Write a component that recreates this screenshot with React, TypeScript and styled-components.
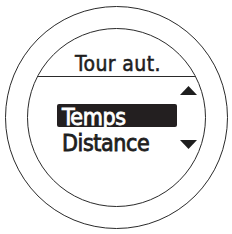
import React from "react";
import styled, { createGlobalStyle } from "styled-components";

const Global = createGlobalStyle`
  html, body { margin: 0; padding: 0; background: #fff; }
  body { width: 232px; height: 234px; overflow: hidden; font-family: "DejaVu Sans Condensed", "DejaVu Sans", sans-serif; }
`;

const Page = styled.div`
  width: 232px;
  height: 234px;
  padding: 6px 0 0 5px;
  box-sizing: border-box;
`;

const Bezel = styled.div`
  width: 223px;
  height: 223px;
  box-sizing: border-box;
  border: 1.4px solid #2a2a2a;
  border-radius: 50%;
  display: flex;
  align-items: center;
  justify-content: center;
`;

const Face = styled.div`
  width: 179px;
  height: 179px;
  box-sizing: border-box;
  border: 1.4px solid #2a2a2a;
  border-radius: 50%;
  overflow: hidden;
  display: flex;
  flex-direction: column;
`;

const Header = styled.div`
  height: 48px;
  flex: none;
  border-bottom: 1.3px solid #2a2a2a;
  display: flex;
  align-items: flex-end;
  justify-content: center;
  padding-bottom: 0;
  box-sizing: border-box;
`;

const Title = styled.span`
  font-size: 21px;
  line-height: 24px;
  color: #1e1e1e;
  -webkit-text-stroke: 0.5px #1e1e1e;
  letter-spacing: 0.4px;
  padding-left: 3px;
`;

const Body = styled.div`
  display: flex;
  padding: 9px 0 0 29px;
`;

const List = styled.div`
  display: flex;
  flex-direction: column;
  padding-top: 18px;
  width: 120px;
`;

const Item = styled.div<{ $active?: boolean }>`
  height: 23px;
  box-sizing: border-box;
  padding: 2px 0 0 5px;
  border-radius: 2px;
  font-size: 23px;
  line-height: 22px;
  color: ${(p) => (p.$active ? "#fff" : "#1e1e1e")};
  -webkit-text-stroke: 0.8px ${(p) => (p.$active ? "#fff" : "#1e1e1e")};
  letter-spacing: -0.4px;
  background: ${(p) => (p.$active ? "#231f20" : "transparent")};
  margin-bottom: 3px;
`;

const Arrows = styled.div`
  display: flex;
  flex-direction: column;
  justify-content: space-between;
  height: 63px;
  margin-left: 3px;
`;

const Arrow = ({ up }: { up?: boolean }) => (
  <svg width="17" height="9" viewBox="0 0 17 9">
    <polygon points={up ? "8.5,0 17,9 0,9" : "0,0 17,0 8.5,9"} fill="#1e1e1e" />
  </svg>
);

export default function App() {
  return (
    <>
      <Global />
      <Page>
        <Bezel>
          <Face>
            <Header>
              <Title>Tour aut.</Title>
            </Header>
            <Body>
              <List>
                <Item $active>Temps</Item>
                <Item>Distance</Item>
              </List>
              <Arrows>
                <Arrow up />
                <Arrow />
              </Arrows>
            </Body>
          </Face>
        </Bezel>
      </Page>
    </>
  );
}
